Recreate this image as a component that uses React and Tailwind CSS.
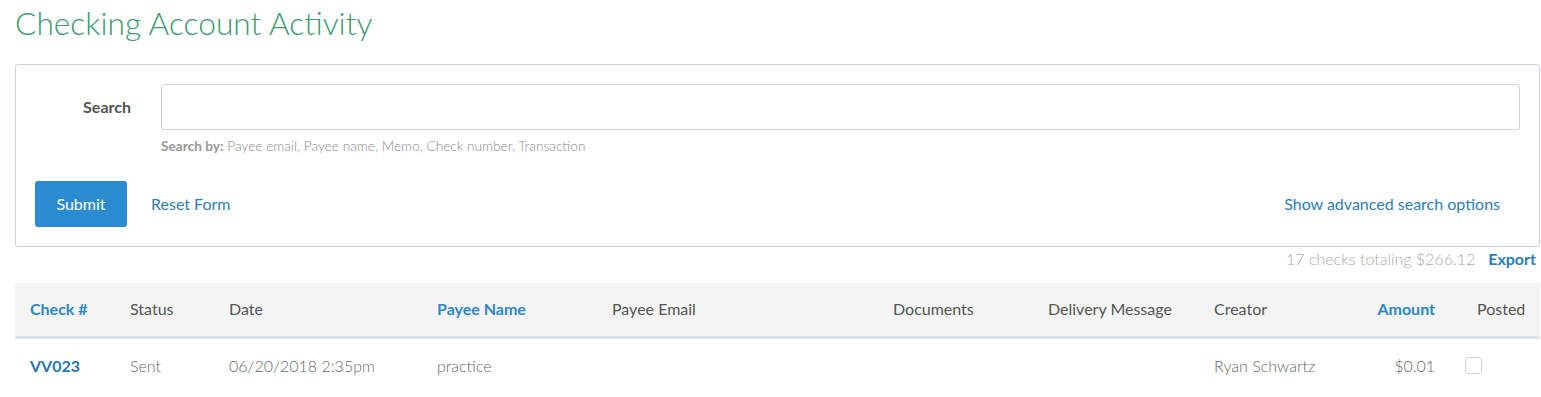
const COLUMNS = [
  { label: 'Check #', sortable: true, className: 'w-[100px]' },
  { label: 'Status', className: 'w-[99px]' },
  { label: 'Date', className: 'w-[208px]' },
  { label: 'Payee Name', sortable: true, className: 'w-[175px]' },
  { label: 'Payee Email', className: 'w-[281px]' },
  { label: 'Documents', className: 'w-[155px]' },
  { label: 'Delivery Message', className: 'w-[166px]' },
  { label: 'Creator', className: 'w-[155px]' },
  { label: 'Amount', sortable: true, align: 'right', className: 'w-[96px]' },
  { label: 'Posted', className: 'pl-[27px]' },
];

const ROWS = [
  {
    check: 'VV023',
    status: 'Sent',
    date: '06/20/2018 2:35pm',
    payee: 'practice',
    email: '',
    documents: '',
    message: '',
    creator: 'Ryan Schwartz',
    amount: '$0.01',
  },
];

export default function App() {
  return (
    <div className="min-h-screen bg-white text-[#555] font-['Lato','Open_Sans',sans-serif]">
      <div className="pl-[15px] pr-px">
        <h1 className="pt-[3px] text-[31.7px] leading-[40px] font-light text-[#3c9a70]">Checking Account Activity</h1>

        <form className="mt-[21px] rounded-[3px] border border-[#c9d2da] pt-[19px] pb-[19px] pl-[19px] pr-[19px]">
          <div className="flex">
            <label className="w-[96px] pt-[11px] text-right text-[16px] font-bold leading-[24px] text-[#555]">Search</label>
            <div className="ml-[30px] flex-1">
              <input className="h-[46px] w-full rounded-[3px] border border-[#ccd3d9] bg-white px-3 outline-none" />
              <p className="mt-[7px] text-[13.7px] font-light leading-[18px] text-[#8a8a8a]">
                <span className="font-bold text-[#999]">Search by:</span> Payee email, Payee name, Memo, Check number, Transaction
              </p>
            </div>
          </div>
          <div className="mt-[26px] flex items-center pr-[20px]">
            <button type="button" className="h-[46px] w-[92px] rounded-[3px] bg-[#2a8bd0] text-[16px] text-white">Submit</button>
            <a className="ml-[24px] text-[16px] text-[#2b7db6]">Reset Form</a>
            <a className="ml-auto text-[16px] text-[#2b7db6]">Show advanced search options</a>
          </div>
        </form>

        <div className="flex h-[24px] items-center justify-end pr-[4px] text-[16px]">
          <span className="font-light text-[#aaa]">17 checks totaling $266.12</span>
          <a className="ml-[13px] font-bold text-[#2b7db6]">Export</a>
        </div>

        <table className="mt-[12px] w-full table-fixed border-collapse text-[16px]">
          <thead>
            <tr className="h-[54px] border-b-[3px] border-[#dde3e6] bg-[#f4f4f4]">
              {COLUMNS.map((c) => (
                <th
                  key={c.label}
                  className={`${c.className} px-[15px] ${c.align === 'right' ? 'text-right' : 'text-left'} ${
                    c.sortable ? 'font-bold text-[#2b88c5]' : 'font-normal text-[#555]'
                  }`}
                >
                  {c.label}
                </th>
              ))}
            </tr>
          </thead>
          <tbody className="font-light text-[#666]">
            {ROWS.map((r) => (
              <tr key={r.check} className="h-[56px]">
                <td className="px-[15px] font-bold text-[#2577b0]">{r.check}</td>
                <td className="px-[15px]">{r.status}</td>
                <td className="px-[15px]">{r.date}</td>
                <td className="px-[15px]">{r.payee}</td>
                <td className="px-[15px]">{r.email}</td>
                <td className="px-[15px]">{r.documents}</td>
                <td className="px-[15px]">{r.message}</td>
                <td className="px-[15px]">{r.creator}</td>
                <td className="px-[15px] text-right">{r.amount}</td>
                <td className="pl-[15px]">
                  <span className="block h-[17px] w-[17px] rounded-[3px] border border-[#d4d4d4]" />
                </td>
              </tr>
            ))}
          </tbody>
        </table>
      </div>
    </div>
  );
}
